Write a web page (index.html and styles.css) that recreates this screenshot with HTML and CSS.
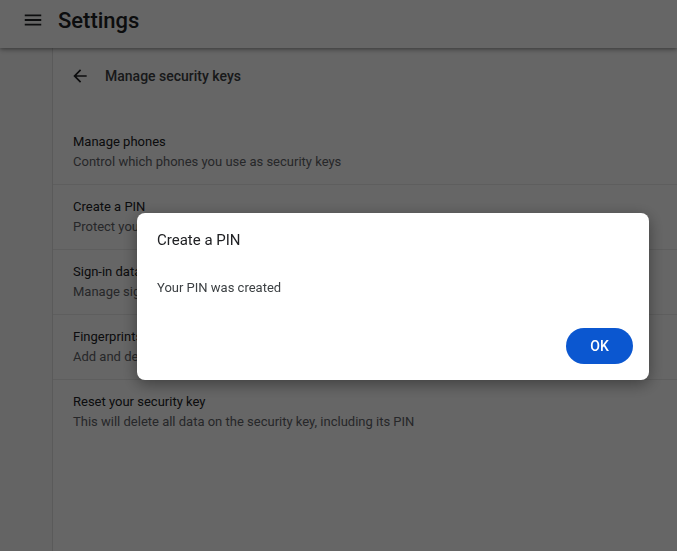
FILE: index.html
```html
<!DOCTYPE html>
<html lang="en">
<head>
<meta charset="UTF-8">
<meta name="viewport" content="width=device-width, initial-scale=1.0">
<title>Settings</title>
<link rel="stylesheet" href="styles.css">
</head>
<body>

<header class="topbar">
    <svg class="menu-icon" viewBox="0 0 24 24" width="22" height="22"><path d="M3 18h18v-2H3v2zm0-5h18v-2H3v2zm0-7v2h18V6H3z"/></svg>
    <h1>Settings</h1>
</header>

<div class="layout">
    <nav class="sidebar"></nav>

    <main class="card">
        <div class="subpage-header">
            <svg class="back-icon" viewBox="0 0 24 24" width="20" height="20"><path d="M20 11H7.83l5.59-5.59L12 4l-8 8 8 8 1.41-1.41L7.83 13H20v-2z"/></svg>
            <span>Manage security keys</span>
        </div>

        <div class="rows">
            <div class="row">
                <div class="row-title">Manage phones</div>
                <div class="row-sub">Control which phones you use as security keys</div>
            </div>
            <div class="row">
                <div class="row-title">Create a PIN</div>
                <div class="row-sub">Protect your security key with a PIN</div>
            </div>
            <div class="row">
                <div class="row-title">Sign-in data</div>
                <div class="row-sub">Manage sign-in data stored on your security key</div>
            </div>
            <div class="row">
                <div class="row-title">Fingerprints</div>
                <div class="row-sub">Add and delete fingerprints saved on your security key</div>
            </div>
            <div class="row">
                <div class="row-title">Reset your security key</div>
                <div class="row-sub">This will delete all data on the security key, including its PIN</div>
            </div>
        </div>
    </main>
</div>

<div class="scrim"></div>

<div class="dialog">
    <div class="dialog-title">Create a PIN</div>
    <div class="dialog-body">Your PIN was created</div>
    <div class="dialog-actions">
        <button class="ok-button">OK</button>
    </div>
</div>

</body>
</html>
```

FILE: styles.css
```css
body {
    margin: 0;
    height: 100vh;
    font-family: Roboto, 'Liberation Sans', sans-serif;
    background: #fafafa;
    color: #202124;
    overflow: hidden;
}

.topbar {
    position: relative;
    z-index: 2;
    height: 48px;
    box-sizing: border-box;
    display: flex;
    align-items: center;
    gap: 14px;
    padding: 0 0 8px 22px;
    background: white;
    box-shadow: 0 1px 4px rgba(0,0,0,0.35), 0 2px 6px rgba(0,0,0,0.15);
}

.menu-icon {
    fill: #202124;
}

.topbar h1 {
    margin: 0;
    font-size: 22px;
    font-weight: 500;
}

.layout {
    display: flex;
    height: calc(100vh - 48px);
}

.sidebar {
    width: 52px;
    flex-shrink: 0;
}

.card {
    flex: 1;
    background: white;
    border-left: 1px solid #e0e0e0;
}

.subpage-header {
    height: 56px;
    display: flex;
    align-items: center;
    gap: 15px;
    padding-left: 17px;
    font-size: 14px;
    font-weight: 500;
    color: #3c4043;
}

.back-icon {
    fill: #202124;
}

.rows {
    margin-top: 16px;
}

.row {
    padding: 12px 0 12px 20px;
    border-top: 1px solid #ebebeb;
    font-size: 13px;
    line-height: 20px;
}

.row:first-child {
    border-top: none;
}

.row-title {
    color: #202124;
}

.row-sub {
    color: #5f6368;
}

.scrim {
    position: fixed;
    inset: 0;
    z-index: 5;
    background: rgba(0,0,0,0.6);
}

.dialog {
    position: fixed;
    z-index: 6;
    left: 137px;
    top: 213px;
    width: 512px;
    box-sizing: border-box;
    padding: 17px 16px 16px 20px;
    background: white;
    border-radius: 8px;
    box-shadow: 0 4px 16px rgba(0,0,0,0.4);
}

.dialog-title {
    font-size: 15px;
    line-height: 20px;
    color: #202124;
}

.dialog-body {
    margin-top: 28px;
    font-size: 13px;
    line-height: 20px;
    color: #3c4043;
}

.dialog-actions {
    margin-top: 30px;
    display: flex;
    justify-content: flex-end;
}

.ok-button {
    width: 67px;
    height: 36px;
    border: none;
    border-radius: 18px;
    background: #0b57d0;
    color: white;
    font-family: inherit;
    font-size: 14px;
    font-weight: 500;
    cursor: pointer;
}
```
